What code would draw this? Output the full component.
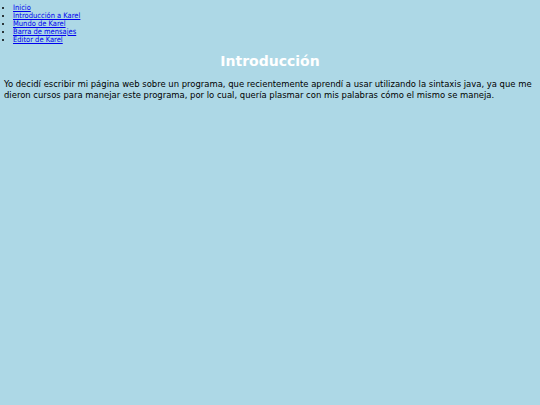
import React from "react";

const links = [
  "Inicio",
  "Introducción a Karel",
  "Mundo de Karel",
  "Barra de mensajes",
  "Editor de Karel",
];

export default function App() {
  return (
    <div className="min-h-[405px] bg-[#add8e6] text-black font-['DejaVu_Sans_Condensed','DejaVu_Sans',sans-serif]">
      <ul className="list-disc pl-[13px] pt-[4px] text-[7.5px] leading-[8px]">
        {links.map((l) => (
          <li key={l}>
            <a href="#" className="text-[#0000ee] underline">
              {l}
            </a>
          </li>
        ))}
      </ul>
      <h1 className="mt-[7px] text-center font-['DejaVu_Sans',sans-serif] text-[14px] font-bold text-white leading-[20px]">
        Introducción
      </h1>
      <p className="mt-[7px] px-[4px] text-[9.4px] leading-[11px]">
        Yo decidí escribir mi página web sobre un programa, que recientemente
        aprendí a usar utilizando la sintaxis java, ya que me dieron cursos para
        manejar este programa, por lo cual, quería plasmar con mis palabras cómo
        el mismo se maneja.
      </p>
    </div>
  );
}
